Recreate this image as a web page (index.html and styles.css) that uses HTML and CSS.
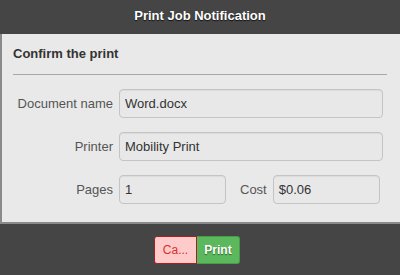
FILE: index.html
```html
<!DOCTYPE html>
<html>
<head>
<meta charset="utf-8">
<link rel="stylesheet" href="styles.css">
</head>
<body>
<div class="dialog">
  <div class="header">Print Job Notification</div>
  <div class="content">
    <div class="subtitle">Confirm the print</div>
    <div class="rule"></div>
    <div class="form">
      <div class="row">
        <label class="label">Document name</label>
        <div class="field wide">Word.docx</div>
      </div>
      <div class="row">
        <label class="label">Printer</label>
        <div class="field wide">Mobility Print</div>
      </div>
      <div class="row">
        <label class="label">Pages</label>
        <div class="field half">1</div>
        <label class="label small">Cost</label>
        <div class="field half">$0.06</div>
      </div>
    </div>
  </div>
  <div class="footer">
    <div class="btns">
      <button class="btn cancel">Ca...</button>
      <button class="btn print">Print</button>
    </div>
  </div>
</div>
</body>
</html>
```
FILE: styles.css
```css
html, body {
  margin: 0;
  padding: 0;
  background: #444;
}
.dialog {
  width: 400px;
  height: 275px;
  display: flex;
  flex-direction: column;
  font-family: "Liberation Sans", Arial, sans-serif;
  font-size: 13px;
  background: #454545;
}
.header {
  height: 34px;
  flex: none;
  box-sizing: border-box;
  padding-bottom: 4px;
  background: #454545;
  border-radius: 5px 5px 0 0;
  color: #fff;
  font-weight: bold;
  font-size: 13px;
  display: flex;
  align-items: center;
  justify-content: center;
  text-shadow: 0 1px 1px #111;
}
.content {
  flex: none;
  background: #e9e9e9;
  border-left: 2px solid #8a8a8a;
  border-bottom: 2px solid #8a8a8a;
  padding: 11px 13px 0 11px;
  box-sizing: border-box;
  height: 190px;
}
.subtitle {
  font-weight: bold;
  color: #333;
  height: 18px;
  line-height: 18px;
}
.rule {
  margin-top: 11px;
  height: 1px;
  background: #a8a8a8;
}
.form {
  margin-top: 14px;
  display: flex;
  flex-direction: column;
  gap: 14px;
}
.row {
  display: flex;
  align-items: center;
  gap: 6px;
}
.label {
  width: 100px;
  text-align: right;
  color: #555;
  flex: none;
}
.label.small {
  width: auto;
  margin-left: 8px;
}
.field {
  height: 29px;
  box-sizing: border-box;
  border: 1px solid #c4c4c4;
  border-radius: 4px;
  background: #e8e8e8;
  box-shadow: inset 0 1px 1px rgba(0,0,0,0.06);
  color: #333;
  padding: 0 5px;
  display: flex;
  align-items: center;
}
.wide {
  width: 264px;
}
.half {
  width: 107px;
}
.footer {
  flex: 1;
  display: flex;
  justify-content: center;
  padding-top: 12px;
  padding-right: 6px;
  box-sizing: border-box;
}
.btns {
  display: flex;
  height: 28px;
}
.btn {
  font-family: "Liberation Sans", Arial, sans-serif;
  font-size: 12px;
  height: 28px;
  width: 43px;
  padding: 0;
  margin: 0;
  box-sizing: border-box;
  cursor: pointer;
}
.cancel {
  background: #fecaca;
  color: #d9302c;
  border: 1px solid #a52020;
  border-radius: 3px 0 0 3px;
}
.print {
  background: #5cb85c;
  color: #fff;
  font-weight: bold;
  border: 1px solid #4a9a4a;
  border-left: none;
  border-radius: 0 3px 3px 0;
  text-shadow: 0 1px 1px #2a602a;
}
```
